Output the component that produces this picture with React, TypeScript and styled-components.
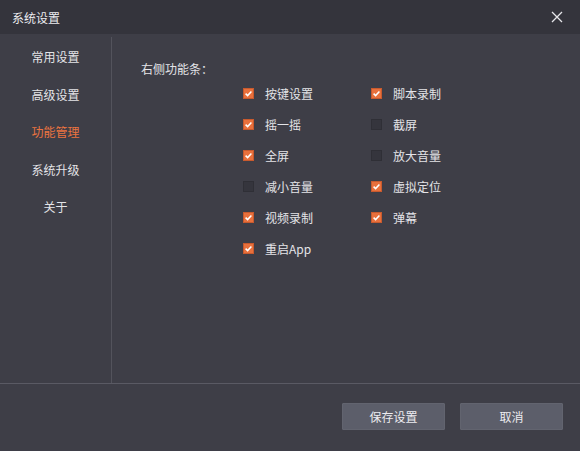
import React from "react";
import styled, { createGlobalStyle } from "styled-components";

const Global = createGlobalStyle`
  html, body { margin: 0; padding: 0; background: #3d3d46; }
  * { box-sizing: border-box; }
`;

const FONT = `"Microsoft YaHei", "Noto Sans CJK SC", "Noto Sans", sans-serif`;

const Window = styled.div`
  width: 580px;
  height: 451px;
  background: #3e3e47;
  font-family: ${FONT};
  font-size: 12px;
  color: #e2e2e6;
  display: flex;
  flex-direction: column;
`;

const TitleBar = styled.div`
  height: 34px;
  background: #34343c;
  display: flex;
  align-items: center;
  justify-content: space-between;
  padding: 0 16px 0 12px;
  flex-shrink: 0;
`;

const Title = styled.span`
  color: #ececf0;
  font-size: 12px;
`;

const CloseBtn = styled.button`
  width: 14px;
  height: 14px;
  padding: 0;
  border: 0;
  background: transparent;
  display: flex;
  align-items: center;
  justify-content: center;
  cursor: pointer;
`;

const Main = styled.div`
  display: flex;
  height: 350px;
  border-bottom: 1px solid #5a5a64;
  flex-shrink: 0;
`;

const Sidebar = styled.div`
  width: 112px;
  border-right: 1px solid #53535c;
  margin-top: 3px;
  padding-top: 1px;
  display: flex;
  flex-direction: column;
`;

const NavItem = styled.div<{ $active?: boolean }>`
  height: 37.5px;
  display: flex;
  align-items: center;
  justify-content: center;
  color: ${(p) => (p.$active ? "#ec7440" : "#e4e4e8")};
  cursor: pointer;
`;

const Content = styled.div`
  flex: 1;
  padding: 26px 0 0 29px;
`;

const SectionLabel = styled.div`
  height: 17px;
  line-height: 17px;
  color: #e4e4e8;
`;

const Grid = styled.div`
  display: grid;
  grid-template-columns: 128px 128px;
  grid-auto-rows: 31px;
  margin: 1px 0 0 102px;
`;

const Option = styled.label`
  display: flex;
  align-items: center;
  gap: 11px;
  color: #e4e4e8;
  cursor: pointer;
`;

const Box = styled.span<{ $checked: boolean }>`
  width: 11px;
  height: 11px;
  flex-shrink: 0;
  border: 1px solid ${(p) => (p.$checked ? "#c85a2e" : "#2f2f36")};
  background: ${(p) => (p.$checked ? "#e8703c" : "#35353d")};
  display: flex;
  align-items: center;
  justify-content: center;
`;

const Footer = styled.div`
  flex: 1;
  display: flex;
  justify-content: flex-end;
  align-items: flex-start;
  gap: 15px;
  padding: 19px 17px 0 0;
`;

const Button = styled.button`
  width: 103px;
  height: 27px;
  background: #5c5e6a;
  border: 1px solid #62646f;
  border-radius: 1px;
  color: #ececf0;
  font-family: ${FONT};
  font-size: 12px;
  cursor: pointer;
  padding: 0;
`;

const nav = ["常用设置", "高级设置", "功能管理", "系统升级", "关于"];

const options: [string, boolean][] = [
  ["按键设置", true],
  ["脚本录制", true],
  ["摇一摇", true],
  ["截屏", false],
  ["全屏", true],
  ["放大音量", false],
  ["减小音量", false],
  ["虚拟定位", true],
  ["视频录制", true],
  ["弹幕", true],
  ["重启App", true],
];

const Check = ({ checked }: { checked: boolean }) => (
  <Box $checked={checked}>
    {checked && (
      <svg width="9" height="9" viewBox="0 0 9 9">
        <path d="M1.6 4.6 L3.6 6.6 L7.4 2.4" stroke="#fff" strokeWidth="1.5" fill="none" />
      </svg>
    )}
  </Box>
);

export default function App() {
  return (
    <>
      <Global />
      <Window>
        <TitleBar>
          <Title>系统设置</Title>
          <CloseBtn aria-label="close">
            <svg width="12" height="12" viewBox="0 0 12 12">
              <path d="M1 1 L11 11 M11 1 L1 11" stroke="#e6e6ea" strokeWidth="1.3" />
            </svg>
          </CloseBtn>
        </TitleBar>
        <Main>
          <Sidebar>
            {nav.map((n) => (
              <NavItem key={n} $active={n === "功能管理"}>
                {n}
              </NavItem>
            ))}
          </Sidebar>
          <Content>
            <SectionLabel>右侧功能条：</SectionLabel>
            <Grid>
              {options.map(([label, checked]) => (
                <Option key={label}>
                  <Check checked={checked} />
                  {label}
                </Option>
              ))}
            </Grid>
          </Content>
        </Main>
        <Footer>
          <Button>保存设置</Button>
          <Button>取消</Button>
        </Footer>
      </Window>
    </>
  );
}
